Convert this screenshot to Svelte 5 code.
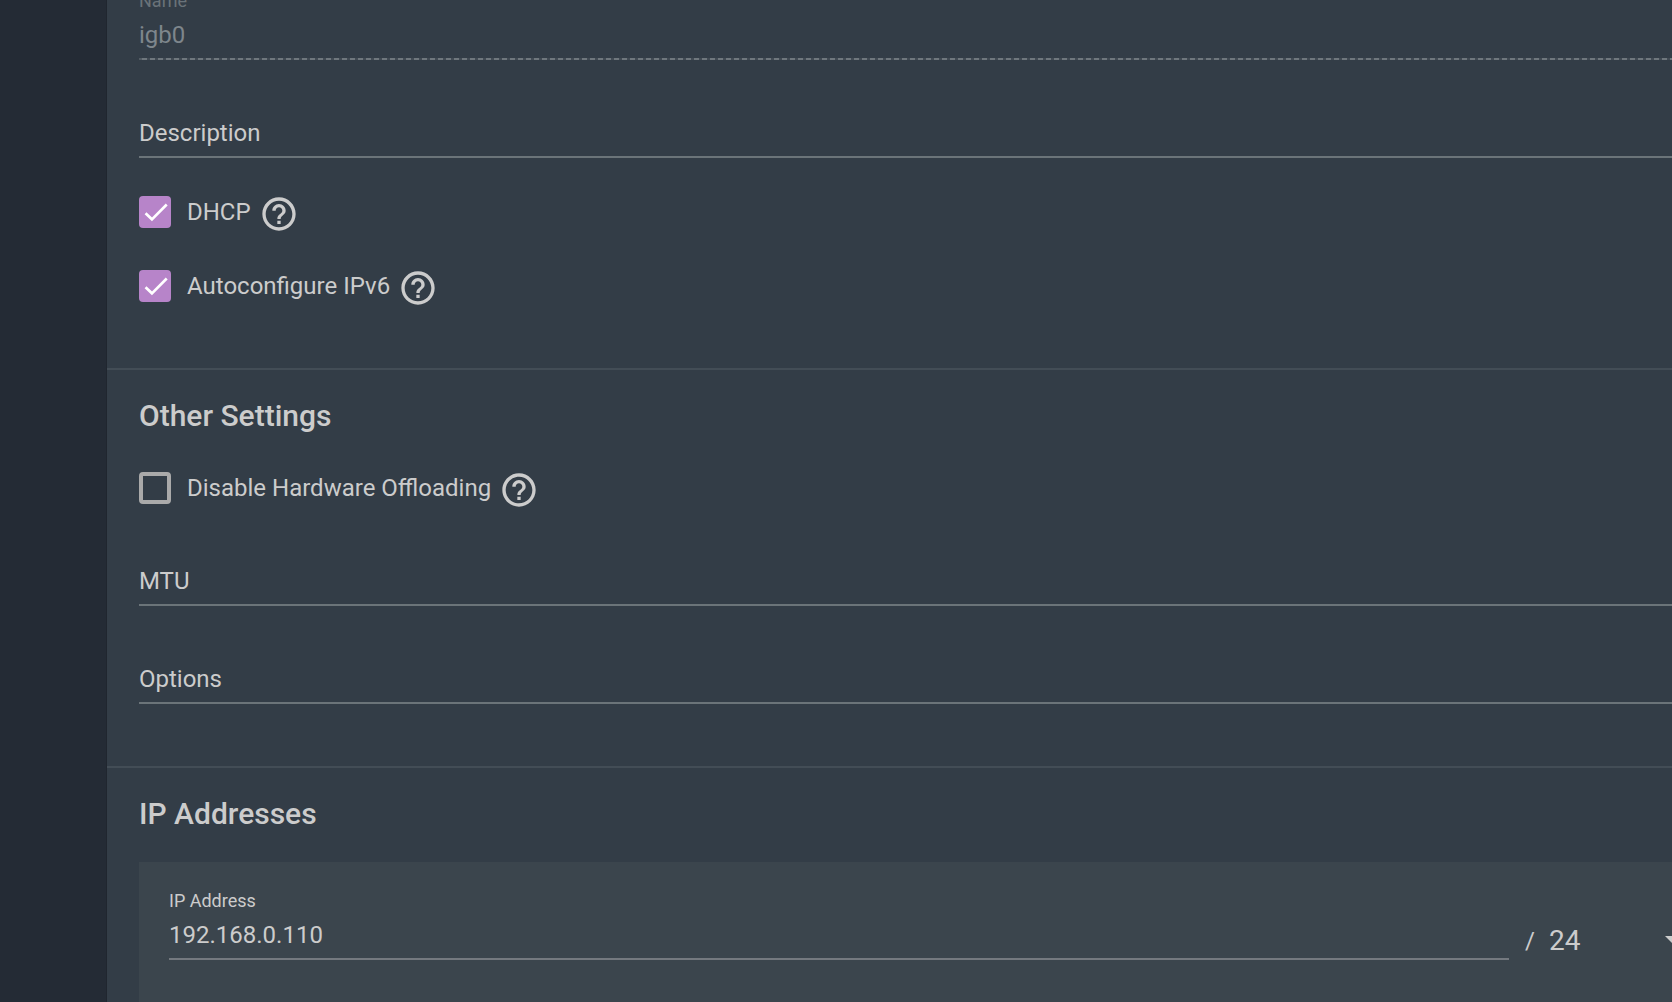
<script>
  let name = $state('igb0');
  let description = $state('');
  let dhcp = $state(true);
  let autoconfigure = $state(true);
  let disableOffloading = $state(false);
  let mtu = $state('');
  let options = $state('');
  let address = $state('192.168.0.110');
  let netmask = $state(24);
  const masks = Array.from({ length: 32 }, (_, i) => i + 1);
</script>

{#snippet help(topic)}
  <button type="button" class="help" aria-label={`Help: ${topic}`}>
    <svg viewBox="0 0 24 24" aria-hidden="true">
      <path d="M11 18h2v-2h-2v2zm1-16C6.480 2 2 6.480 2 12s4.480 10 10 10 10-4.480 10-10S17.520 2 12 2zm0 18c-4.410 0-8-3.590-8-8s3.590-8 8-8 8 3.590 8 8-3.590 8-8 8zm0-14c-2.210 0-4 1.790-4 4h2c0-1.100.9-2 2-2s2 .9 2 2c0 2-3 1.750-3 5h2c0-2.250 3-2.500 3-5 0-2.210-1.790-4-4-4z" />
    </svg>
  </button>
{/snippet}

{#snippet tick()}
  <svg class="tick" viewBox="0 0 24 24" aria-hidden="true">
    <path d="M4.900 12.900 9.700 17.500 20.800 6.400" />
  </svg>
{/snippet}

<div class="shell">
  <aside></aside>
  <main>
    <form>
      <section class="first">
        <div class="field disabled">
          <label class="small" for="name">Name</label>
          <input id="name" type="text" bind:value={name} disabled />
        </div>
        <div class="field floating">
          <label for="description" class:hidden={description}>Description</label>
          <input id="description" type="text" bind:value={description} />
        </div>
        <div class="check">
          <label>
            <span class="box"><input type="checkbox" bind:checked={dhcp} />{@render tick()}</span>
            <span>DHCP</span>
          </label>
          {@render help('DHCP')}
        </div>
        <div class="check">
          <label>
            <span class="box"><input type="checkbox" bind:checked={autoconfigure} />{@render tick()}</span>
            <span>Autoconfigure IPv6</span>
          </label>
          {@render help('Autoconfigure IPv6')}
        </div>
      </section>

      <section>
        <h2>Other Settings</h2>
        <div class="check">
          <label>
            <span class="box"><input type="checkbox" bind:checked={disableOffloading} />{@render tick()}</span>
            <span>Disable Hardware Offloading</span>
          </label>
          {@render help('Disable Hardware Offloading')}
        </div>
        <div class="field floating">
          <label for="mtu" class:hidden={mtu}>MTU</label>
          <input id="mtu" type="text" bind:value={mtu} />
        </div>
        <div class="field floating">
          <label for="options" class:hidden={options}>Options</label>
          <input id="options" type="text" bind:value={options} />
        </div>
      </section>

      <section class="last">
        <h2>IP Addresses</h2>
        <div class="card">
          <div class="field">
            <label class="small" for="address">IP Address</label>
            <input id="address" type="text" bind:value={address} />
          </div>
          <span class="slash">/</span>
          <div class="mask">
            <select aria-label="Netmask" bind:value={netmask}>
              {#each masks as m}
                <option value={m}>{m}</option>
              {/each}
            </select>
            <svg viewBox="0 0 20 10" aria-hidden="true"><path d="M0 0h20L10 10z" /></svg>
          </div>
        </div>
      </section>
    </form>
  </main>
</div>

<style>
  :global(body) {
    background: #333d47;
  }
  .shell {
    display: flex;
    height: 100vh;
    overflow: hidden;
    color: #cccccc;
    font: 24px/28px Roboto, sans-serif;
  }
  aside {
    flex: 0 0 107px;
    background: #242b35;
    box-shadow: inset -1px 0 #20262f;
  }
  main {
    flex: 1;
    min-width: 0;
    overflow: hidden;
    background: #333d47;
  }
  form {
    margin-top: -8px;
  }
  section {
    padding: 28px 0 62px 32px;
    border-bottom: 2px solid #434d56;
  }
  section.first {
    padding-top: 0;
  }
  section.last {
    padding-bottom: 0;
    border: 0;
  }
  h2 {
    margin: 0 0 34px;
    font-size: 30px;
    line-height: 36px;
    font-weight: 500;
  }
  .last h2 {
    margin-bottom: 30px;
  }
  .field {
    display: grid;
    border-bottom: 2px solid #6b7479;
  }
  .field input {
    width: 100%;
    height: 46px;
    margin: 0;
    padding: 0;
    border: 0;
    outline: 0;
    background: none;
    color: inherit;
    font: inherit;
  }
  .small {
    padding-bottom: 2px;
    font-size: 18px;
    line-height: 18px;
  }
  .disabled {
    color: #7e868c;
    border-bottom: 0;
    padding-bottom: 2px;
    background:
      linear-gradient(#535c64 0 0) bottom left / 3px 2px no-repeat,
      repeating-linear-gradient(90deg, #424b54 0 3px, #6f777d 3px 8px) bottom / 100% 2px no-repeat;
  }
  .disabled .small {
    color: #6a7379;
  }
  .floating {
    margin-top: 50px;
  }
  .floating label,
  .floating input {
    grid-area: 1 / 1;
  }
  .floating label {
    padding-top: 9px;
  }
  .hidden {
    visibility: hidden;
  }
  .check {
    display: flex;
    align-items: center;
    gap: 8px;
    height: 40px;
    margin-top: 34px;
  }
  h2 + .check {
    margin-top: 0;
  }
  .check label {
    display: flex;
    align-items: center;
    gap: 16px;
  }
  .box {
    display: grid;
    width: 32px;
    height: 32px;
  }
  .box input,
  .tick {
    grid-area: 1 / 1;
    width: 32px;
    height: 32px;
  }
  .box input {
    appearance: none;
    box-sizing: border-box;
    margin: 0;
    border: 4px solid #aaaaaa;
    border-radius: 4px;
  }
  .box input:checked {
    border: 0;
    background: #b784c9;
  }
  .tick {
    fill: none;
    stroke: #ffffff;
    stroke-width: 2;
    visibility: hidden;
    pointer-events: none;
  }
  .box input:checked + .tick {
    visibility: visible;
  }
  .help {
    display: flex;
    padding: 4px 0 0;
    border: 0;
    background: none;
    color: inherit;
  }
  .help svg {
    width: 40px;
    height: 40px;
    fill: currentColor;
  }
  .card {
    display: flex;
    align-items: flex-end;
    margin-right: -13px;
    padding: 30px 0 44px 30px;
    background: #3b454d;
  }
  .card .field {
    flex: 1;
    border-color: #74797f;
  }
  .slash {
    margin: 0 14px 5px 16px;
  }
  .mask {
    display: grid;
    align-items: center;
    width: 136px;
    margin-bottom: 2px;
  }
  .mask select,
  .mask svg {
    grid-area: 1 / 1;
  }
  .mask select {
    appearance: none;
    width: 100%;
    height: 34px;
    padding: 0;
    border: 0;
    background: none;
    color: inherit;
    font: 28px/34px Roboto, sans-serif;
  }
  .mask svg {
    justify-self: end;
    width: 20px;
    height: 10px;
    fill: currentColor;
    pointer-events: none;
  }
</style>
